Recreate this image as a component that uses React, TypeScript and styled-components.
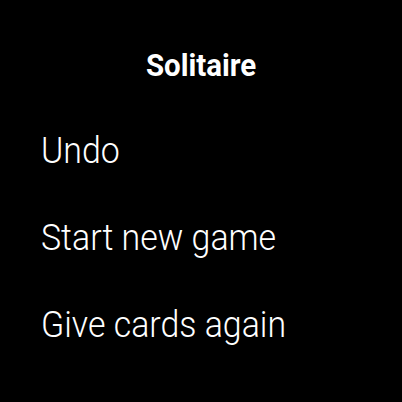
import React from 'react';
import styled, { createGlobalStyle } from 'styled-components';

const GlobalStyle = createGlobalStyle`
  html, body {
    margin: 0;
    padding: 0;
    background: #000;
  }
`;

const items = ['Undo', 'Start new game', 'Give cards again'];

const App: React.FC = () => {
  return (
    <>
      <GlobalStyle />
      <Screen>
        <Title>
          <Condensed $scale={0.95}>Solitaire</Condensed>
        </Title>
        <Menu>
          {items.map((label) => (
            <MenuItem key={label}>
              <Condensed $scale={0.916}>{label}</Condensed>
            </MenuItem>
          ))}
        </Menu>
      </Screen>
    </>
  );
};

export default App;

const Screen = styled.div`
  width: 402px;
  height: 402px;
  background: #000;
  color: #fff;
  font-family: Roboto, 'Noto Sans', sans-serif;
  overflow: hidden;
  display: flex;
  flex-direction: column;
`;

// Roboto Condensed is not installed, so squeeze Roboto a little
const Condensed = styled.span<{ $scale: number }>`
  display: inline-block;
  white-space: nowrap;
  transform: scaleX(${(p) => p.$scale});
`;

const Title = styled.h1`
  margin: 0;
  padding-top: 46px;
  text-align: center;
  font-size: 31px;
  line-height: 40px;
  font-weight: 700;

  ${Condensed} {
    transform-origin: center;
  }
`;

const Menu = styled.ul`
  list-style: none;
  margin: 0;
  padding: 21px 0 0 41px;
  display: flex;
  flex-direction: column;
`;

const MenuItem = styled.li`
  font-size: 37px;
  line-height: 87px;
  font-weight: 300;

  ${Condensed} {
    transform-origin: left center;
  }
`;
